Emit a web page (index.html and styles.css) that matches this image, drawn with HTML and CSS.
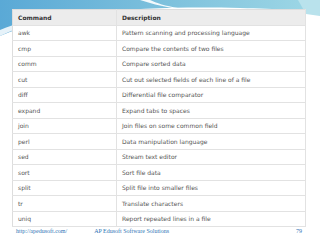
FILE: index.html
```html
<!DOCTYPE html>
<html lang="en">
<head>
  <meta charset="UTF-8" />
  <title>Unix Commands</title>
  <link rel="stylesheet" href="styles.css">
</head>
<body>

<div class="slide">
  <svg class="swoosh" width="320" height="40" viewBox="0 0 320 40">
    <defs>
      <linearGradient id="band" x1="0" y1="0" x2="1" y2="0">
        <stop offset="0" stop-color="#5aa9d6"/>
        <stop offset="0.5" stop-color="#7cc0dc"/>
        <stop offset="1" stop-color="#9fd8e6"/>
      </linearGradient>
    </defs>
    <path d="M0 0 H320 V12 C300 10 280 9 240 8 C150 6 60 10 0 36 Z" fill="url(#band)"/>
    <path d="M0 30 C30 18 60 12 110 9 C60 14 30 22 0 36 Z" fill="#ffffff" opacity="0.85"/>
    <path d="M140 0 C150 3 160 6 172 8 L178 8 C166 6 156 3 150 0 Z" fill="#ffffff" opacity="0.9"/>
    <path d="M298 0 H320 V16 L306 14 Z" fill="#b9e2ec"/>
  </svg>

  <table class="cmd-table">
    <tr><th>Command</th><th>Description</th></tr>
    <tr><td>awk</td><td>Pattern scanning and processing language</td></tr>
    <tr><td>cmp</td><td>Compare the contents of two files</td></tr>
    <tr><td>comm</td><td>Compare sorted data</td></tr>
    <tr><td>cut</td><td>Cut out selected fields of each line of a file</td></tr>
    <tr><td>diff</td><td>Differential file comparator</td></tr>
    <tr><td>expand</td><td>Expand tabs to spaces</td></tr>
    <tr><td>join</td><td>Join files on some common field</td></tr>
    <tr><td>perl</td><td>Data manipulation language</td></tr>
    <tr><td>sed</td><td>Stream text editor</td></tr>
    <tr><td>sort</td><td>Sort file data</td></tr>
    <tr><td>split</td><td>Split file into smaller files</td></tr>
    <tr><td>tr</td><td>Translate characters</td></tr>
    <tr><td>uniq</td><td>Report repeated lines in a file</td></tr>
  </table>

  <div class="footer">
    <span class="site">http://apedusoft.com/</span>
    <span class="company">AP Edusoft Software Solutions</span>
    <span class="page">79</span>
  </div>
</div>

</body>
</html>
```

FILE: styles.css
```css
body {
  margin: 0;
  background: #fff;
}

.slide {
  position: relative;
  width: 320px;
  height: 240px;
  overflow: hidden;
  background: #fff;
}

.swoosh {
  position: absolute;
  top: 0;
  left: 0;
}

.cmd-table {
  position: relative;
  margin: 9px 0 0 12px;
  width: 294px;
  border-collapse: collapse;
  font-family: 'DejaVu Sans', Verdana, sans-serif;
  font-size: 6px;
  color: #555;
  background: #fff;
  border: 1px solid #ddd;
}

.cmd-table th,
.cmd-table td {
  height: 14.5px;
  padding: 0 0 0 5px;
  text-align: left;
  border-bottom: 1px solid #e2e2e2;
  border-right: 1px solid #e2e2e2;
}

.cmd-table th {
  background: #ececec;
  color: #333;
  font-weight: bold;
}

.cmd-table th:first-child,
.cmd-table td:first-child {
  width: 98px;
}

.footer {
  display: flex;
  align-items: center;
  margin: 1px 0 0 16px;
  font-family: 'Liberation Serif', serif;
  font-size: 6px;
  color: #2e74b5;
}

.company {
  margin-left: 27px;
}

.page {
  margin-left: auto;
  margin-right: 18px;
}
```
